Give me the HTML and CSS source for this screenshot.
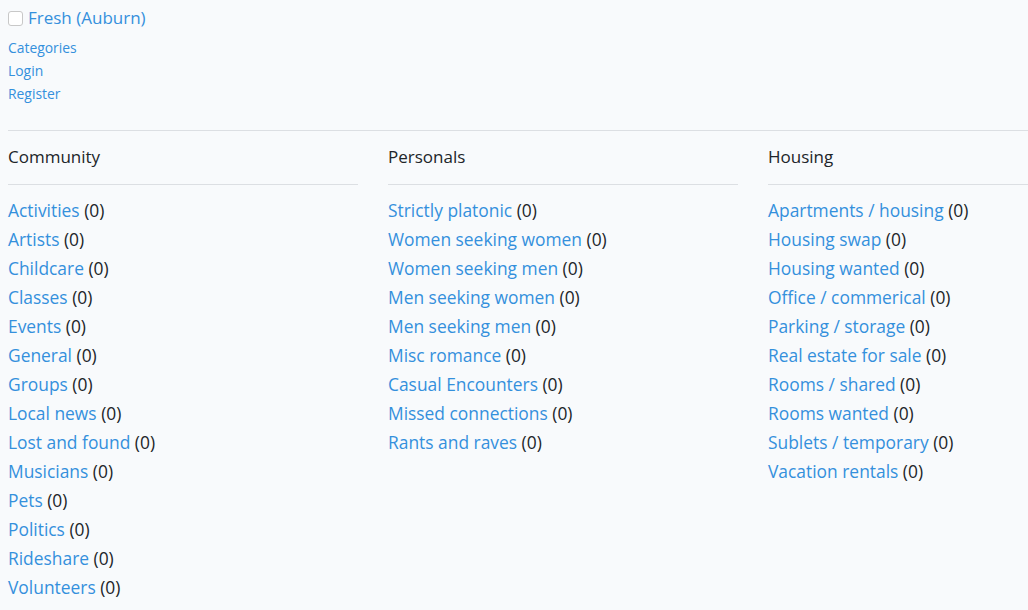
FILE: index.html
```html
<!DOCTYPE html>
<html>
<head>
<meta charset="utf-8">
<link rel="stylesheet" href="styles.css">
</head>
<body>
<div class="page">
  <div class="brand">
    <input type="checkbox" class="toggle">
    <a href="#" class="brand-link">Fresh (Auburn)</a>
  </div>
  <nav class="menu">
    <a href="#">Categories</a>
    <a href="#">Login</a>
    <a href="#">Register</a>
  </nav>
  <hr class="rule">
  <div class="cols">
    <section class="col">
      <h2 class="col-title">Community</h2>
      <ul class="list">
        <li><a href="#">Activities</a> (0)</li>
        <li><a href="#">Artists</a> (0)</li>
        <li><a href="#">Childcare</a> (0)</li>
        <li><a href="#">Classes</a> (0)</li>
        <li><a href="#">Events</a> (0)</li>
        <li><a href="#">General</a> (0)</li>
        <li><a href="#">Groups</a> (0)</li>
        <li><a href="#">Local news</a> (0)</li>
        <li><a href="#">Lost and found</a> (0)</li>
        <li><a href="#">Musicians</a> (0)</li>
        <li><a href="#">Pets</a> (0)</li>
        <li><a href="#">Politics</a> (0)</li>
        <li><a href="#">Rideshare</a> (0)</li>
        <li><a href="#">Volunteers</a> (0)</li>
      </ul>
    </section>
    <section class="col">
      <h2 class="col-title">Personals</h2>
      <ul class="list">
        <li><a href="#">Strictly platonic</a> (0)</li>
        <li><a href="#">Women seeking women</a> (0)</li>
        <li><a href="#">Women seeking men</a> (0)</li>
        <li><a href="#">Men seeking women</a> (0)</li>
        <li><a href="#">Men seeking men</a> (0)</li>
        <li><a href="#">Misc romance</a> (0)</li>
        <li><a href="#">Casual Encounters</a> (0)</li>
        <li><a href="#">Missed connections</a> (0)</li>
        <li><a href="#">Rants and raves</a> (0)</li>
      </ul>
    </section>
    <section class="col">
      <h2 class="col-title">Housing</h2>
      <ul class="list">
        <li><a href="#">Apartments / housing</a> (0)</li>
        <li><a href="#">Housing swap</a> (0)</li>
        <li><a href="#">Housing wanted</a> (0)</li>
        <li><a href="#">Office / commerical</a> (0)</li>
        <li><a href="#">Parking / storage</a> (0)</li>
        <li><a href="#">Real estate for sale</a> (0)</li>
        <li><a href="#">Rooms / shared</a> (0)</li>
        <li><a href="#">Rooms wanted</a> (0)</li>
        <li><a href="#">Sublets / temporary</a> (0)</li>
        <li><a href="#">Vacation rentals</a> (0)</li>
      </ul>
    </section>
  </div>
</div>
</body>
</html>
```

FILE: styles.css
```css
html, body {
  margin: 0;
  padding: 0;
  background: #f8fafc;
  overflow: hidden;
}
body {
  font-family: "Open Sans", "Noto Sans", sans-serif;
  color: #212529;
}
a {
  color: #3490dc;
  text-decoration: none;
}
.page {
  padding: 8px 0 8px 8px;
  overflow: hidden;
}
.brand {
  display: flex;
  align-items: center;
  height: 20px;
}
.toggle {
  appearance: none;
  width: 15px;
  height: 15px;
  margin: 1px 5px 0 0;
  border: 1px solid #c8c8c8;
  border-radius: 3px;
  background: #fff;
}
.brand-link {
  font-size: 17px;
  line-height: 20px;
}
.menu {
  display: flex;
  flex-direction: column;
  margin-top: 8px;
  font-size: 13.9px;
  line-height: 23px;
}
.rule {
  width: 1100px;
  margin: 25px 0 0 0;
  border: 0;
  border-top: 1px solid #dcdfe3;
}
.cols {
  display: grid;
  grid-template-columns: 350px 350px 350px;
  column-gap: 30px;
}
.col-title {
  margin: 0;
  font-size: 17px;
  font-weight: 400;
  line-height: 24px;
  padding: 14px 0 15px;
  border-bottom: 1px solid #dcdfe3;
}
.list {
  list-style: none;
  margin: 0;
  padding: 11px 0 0;
  font-size: 17.4px;
  line-height: 29px;
}
```
